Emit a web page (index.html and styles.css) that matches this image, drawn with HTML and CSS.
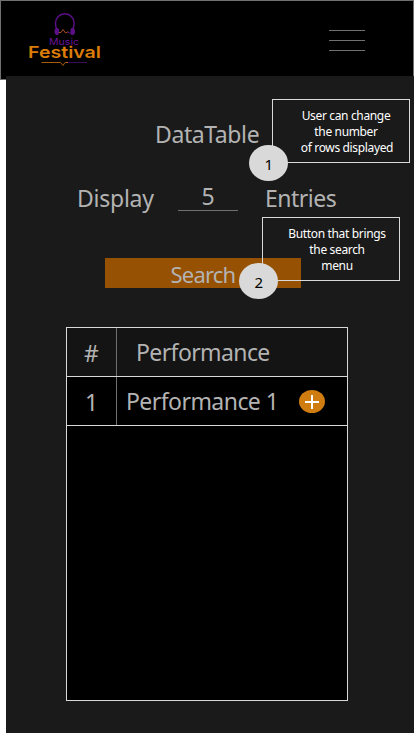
FILE: index.html
```html
<!DOCTYPE html>
<html lang="en">
<head>
<meta charset="utf-8">
<title>Music Festival</title>
<link rel="stylesheet" href="styles.css">
</head>
<body>
<header class="header">
  <svg class="logo" width="76" height="58" viewBox="0 0 76 58" fill="none">
    <path d="M27.500 19C26.500 16 26.500 15 26.500 13a9.300 9.300 0 0 1 18.600 0C45.100 15 45 16 44 19" stroke="#5b1085" stroke-width="1.500"/>
    <path d="M27 18h2l1 1.500v4l-1 1.500h-2l-1.500-2v-3zM44.500 18h-2l-1 1.500v4l1 1.500h2l1.500-2v-3z" fill="#5b1085"/>
    <path d="M30 22.500h2l2-3 2.500 3.500 2-1h1" stroke="#a64c18"/>
    <path d="M38.500 22l2 1h1.500" stroke="#5b1085"/>
    <text class="logo-music" x="20" y="34.500" textLength="30" lengthAdjust="spacingAndGlyphs">Music</text>
    <text class="logo-festival" x="-1" y="48" textLength="73" lengthAdjust="spacingAndGlyphs">Festival</text>
    <path d="M12.500 52.500h19l2.500 3 2-3h4" stroke="#a85b08"/>
    <path d="M39 52.500h19" stroke="#3c0b58"/>
  </svg>
  <div class="menu"><span></span><span></span><span></span></div>
</header>
<main class="main">
  <div class="title-row">
    <h1 class="title">DataTable</h1>
    <aside class="note note-rows">
      <p>User can change<br>the number<br><span class="last-line">of rows displayed</span></p>
      <span class="badge">1</span>
    </aside>
  </div>
  <div class="display-row">
    <span class="display">Display</span>
    <span class="field">5</span>
    <span class="entries">Entries</span>
  </div>
  <div class="search-row">
    <div class="search"><span>Search</span></div>
    <aside class="note note-search">
      <p>Button that brings<br>the search<br>menu</p>
      <span class="badge">2</span>
    </aside>
  </div>
  <section class="table">
    <div class="row head"><div class="num">#</div><div class="cell"><span class="perf-head">Performance</span></div></div>
    <div class="row"><div class="num">1</div><div class="cell"><span class="perf">Performance 1</span>
      <svg class="add" width="26" height="23" viewBox="0 0 26 23"><ellipse cx="13" cy="11.500" rx="13" ry="11.500" fill="#cf7c10"/><path d="M6 12h14M13 5v14" stroke="#fff" stroke-width="2"/></svg>
    </div></div>
  </section>
</main>
</body>
</html>
```
FILE: styles.css
```css
* { box-sizing: border-box; }
html { background: #fff; }
body {
  margin: 0;
  height: 733px;
  overflow: hidden;
  display: flex;
  flex-direction: column;
  font-family: "Noto Sans", "Open Sans", sans-serif;
  font-size: 23px;
  line-height: 32px;
  color: #b3b3b3;
}
.header {
  height: 80px;
  flex: none;
  background: #000;
  border: 1px solid #707070;
  display: flex;
  justify-content: space-between;
  padding: 9px 48px 0 28px;
}
.logo { flex: none; overflow: visible; }
.logo-music { font: 9px Inter, sans-serif; fill: #6a1399; }
.logo-festival { font: 600 16.500px Inter, sans-serif; fill: #dc7d08; }
.menu {
  width: 36px;
  padding-top: 20px;
  display: flex;
  flex-direction: column;
  gap: 9px;
}
.menu span { height: 1px; background: #707070; }
.main {
  position: relative;
  flex: 1;
  margin: -4px 0 0 6px;
  background: #1a1a1a;
  padding: 42px 66px 0 60px;
}
.title-row, .display-row { position: relative; height: 64px; }
.title {
  margin: 0 0 0 89px;
  font-size: 23px;
  font-weight: 400;
  letter-spacing: -0.400px;
}
.display-row { display: flex; align-items: flex-start; }
.display { width: 113px; padding-left: 11px; letter-spacing: -0.250px; }
.field {
  width: 60px;
  height: 31px;
  margin-top: -2px;
  margin-left: -1px;
  border-bottom: 1px solid #707070;
  text-align: center;
  line-height: 32px;
}
.entries { margin-left: 27px; letter-spacing: -0.500px; }
.search-row { position: relative; padding: 12px 47px 0 39px; height: 81px; }
.search {
  height: 30px;
  background: #965103;
  text-align: center;
  font-size: 22px;
  line-height: 32px;
  letter-spacing: -0.800px;
}
.note {
  position: absolute;
  z-index: 1;
  width: 138px;
  height: 64px;
  border: 1px solid #d9d9d9;
  background: transparent;
  color: #fff;
  font-size: 12px;
  line-height: 16px;
  letter-spacing: -0.350px;
  text-align: center;
}
.note p { margin: 0; padding: 8px 0 0 10px; white-space: nowrap; }
.note-rows { left: 206px; top: -19px; }
.note-search { left: 196px; top: -29px; }
.note-search p { padding-left: 12px; }
.last-line { position: relative; left: 1px; }
.badge {
  position: absolute;
  left: -24px;
  top: 45px;
  width: 39px;
  height: 36px;
  border-radius: 50%;
  background: #d9d9d9;
  color: #000;
  font-size: 15px;
  line-height: 38px;
}
.table {
  width: 282px;
  height: 374px;
  border: 1px solid #d9d9d9;
  background: #000;
}
.row { display: flex; height: 49px; border-bottom: 1px solid #d9d9d9; }
.head { background: #141414; }
.num { width: 50px; border-right: 1px solid #707070; text-align: center; line-height: 51px; }
.cell { flex: 1; display: flex; align-items: center; letter-spacing: -0.600px; white-space: nowrap; }
.perf-head { padding-left: 19px; }
.perf { width: 182px; padding-left: 9px; letter-spacing: -0.550px; }
.add { flex: none; }
```
